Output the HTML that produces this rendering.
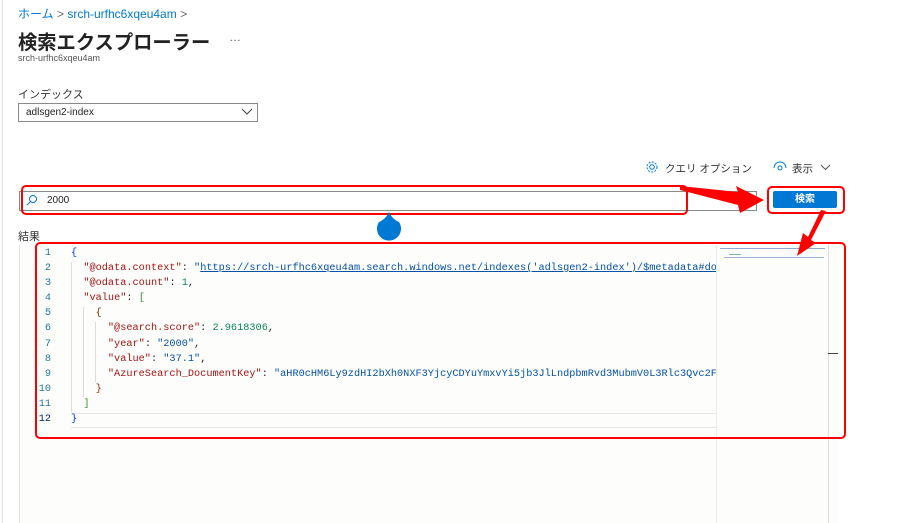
<!DOCTYPE html>
<html><head><meta charset="utf-8"><style>
body{margin:0;width:907px;height:523px;background:#fff;position:relative;overflow:hidden;font-family:"Liberation Sans","Noto Sans CJK JP",sans-serif;}
.a{position:absolute;}
.code{font-family:"Liberation Mono","DejaVu Sans Mono",monospace;font-size:10.25px;white-space:pre;line-height:15.1px;}
.k{color:#a31515}.s{color:#0451a5}.n{color:#098658}.b{color:#0431fa}
</style></head><body>
<div class="a" style="left:2px;top:0;width:1px;height:523px;background:#e1e1e1"></div>
<div class="a" style="left:18px;top:5px;font-size:12px;color:#0078d4">ホーム <span style="color:#666">&gt;</span> srch-urfhc6xqeu4am <span style="color:#666">&gt;</span></div>
<div class="a" style="left:18px;top:27px;font-size:19.3px;font-weight:bold;color:#222">検索エクスプローラー</div>
<div class="a" style="left:229px;top:30px;font-size:12px;color:#666">…</div>
<div class="a" style="left:18px;top:53px;font-size:9px;color:#555">srch-urfhc6xqeu4am</div>
<div class="a" style="left:18px;top:86px;font-size:11px;color:#333">インデックス</div>
<div class="a" style="left:18px;top:103px;width:238px;height:17px;border:1px solid #8a8a8a;font-size:10px;color:#222;line-height:17px;text-indent:7px">adlsgen2-index</div>
<svg class="a" style="left:241px;top:108px" width="12" height="8"><path d="M1 1l5 5 5-5" fill="none" stroke="#444" stroke-width="1"/></svg>
<svg class="a" style="left:645px;top:160px" width="14" height="14"><circle cx="7" cy="7" r="2.3" fill="none" stroke="#0078d4"/><circle cx="7" cy="7" r="5" fill="none" stroke="#0078d4" stroke-dasharray="2 1.3"/></svg>
<div class="a" style="left:665px;top:161px;font-size:10.5px;color:#333">クエリ オプション</div>
<svg class="a" style="left:773px;top:161px" width="14" height="12"><path d="M1 7a6 6 0 0 1 12 0" fill="none" stroke="#0078d4"/><circle cx="7" cy="7" r="2" fill="none" stroke="#0078d4"/></svg>
<div class="a" style="left:792px;top:161px;font-size:10.5px;color:#333">表示</div>
<svg class="a" style="left:820px;top:164px" width="11" height="7"><path d="M1 1l4.5 4.5 4.5-4.5" fill="none" stroke="#555"/></svg>
<div class="a" style="left:19px;top:191px;width:736px;height:18px;border:1px solid #8a8a8a"></div>
<svg class="a" style="left:26px;top:194px" width="12" height="12"><circle cx="7" cy="5" r="3.5" fill="none" stroke="#0078d4"/><path d="M4.5 7.5L1 11" stroke="#0078d4"/></svg>
<div class="a" style="left:47px;top:195px;font-size:10px;color:#222">2000</div>
<div class="a" style="left:773px;top:191px;width:64px;height:17px;background:#0078d4;border-radius:2px;color:#fff;font-size:10px;font-weight:bold;text-align:center;line-height:17px">検索</div>
<div class="a" style="left:18px;top:228px;font-size:11px;color:#333">結果</div>
<div class="a" style="left:19px;top:245px;width:819px;height:278px;background:#fdfdfb;border-left:1px solid #e3e3e3"></div>
<div class="a" style="left:716px;top:245px;width:111px;height:278px;border-left:1px solid #ececec;border-right:1px solid #e0e0e0;background:#fdfdfb"></div>
<div class="a" style="left:720px;top:248px;width:105px;height:1px;background:#8fa8d8"></div>
<div class="a" style="left:724px;top:257px;width:100px;height:1px;background:#a0b0d8"></div>
<div class="a" style="left:729px;top:254px;width:12px;height:1px;background:#7ab89a"></div>
<div class="a" style="left:828px;top:353px;width:10px;height:1px;background:#444"></div>
<div class="a" style="left:71px;top:413px;width:645px;height:1px;background:#e6e6e6"></div>
<div class="a" style="left:71px;top:427px;width:645px;height:1px;background:#e6e6e6"></div>
<div class="a" style="left:71px;top:262px;width:1px;height:150px;background:#ddd"></div>
<div class="a" style="left:83px;top:307px;width:1px;height:90px;background:#ddd"></div>
<div class="a" style="left:95px;top:322px;width:1px;height:60px;background:#ddd"></div>
<div class="a code" style="left:37px;top:246px;color:#237893;text-align:right;width:14px">1
2
3
4
5
6
7
8
9
10
11
<span style="color:#0b216f">12</span></div>
<div class="a code" style="left:71px;top:246px;width:645px;overflow:hidden;color:#222"><span class="b">{</span>
  <span class="k">"@odata.context"</span>: <span class="s">"<u>https://srch-urfhc6xqeu4am.search.windows.net/indexes('adlsgen2-index')/$metadata#docs</u>"</span>,
  <span class="k">"@odata.count"</span>: <span class="n">1</span>,
  <span class="k">"value"</span>: <span style="color:#319331">[</span>
    <span style="color:#7b3814">{</span>
      <span class="k">"@search.score"</span>: <span class="n">2.9618306</span>,
      <span class="k">"year"</span>: <span class="s">"2000"</span>,
      <span class="k">"value"</span>: <span class="s">"37.1"</span>,
      <span class="k">"AzureSearch_DocumentKey"</span>: <span class="s">"aHR0cHM6Ly9zdHI2bXh0NXF3YjcyCDYuYmxvYi5jb3JlLndpbmRvd3MubmV0L3Rlc3Qvc2FtcGxl"</span>
    <span style="color:#7b3814">}</span>
  <span style="color:#319331">]</span>
<span class="b">}</span></div>
<svg class="a" style="left:0;top:0" width="907" height="523">
<g fill="none" stroke="#f00" stroke-width="2">
<rect x="22" y="186" width="665" height="28" rx="4"/>
<rect x="768" y="187" width="76" height="26" rx="4"/>
<rect x="36" y="243" width="809" height="195" rx="4"/>
</g>
<path d="M680 186 L738 192 L736 186 L764 200 L740 213 L738 205 L680 190 Z" fill="#f00"/>
<path d="M826 211 L821 210 L808 237 L803 233 L797 256 L816 243 L811 240 Z" fill="#f00"/>
<path d="M389 212 Q392 219 399 222 A12 12 0 1 1 379 222 Q386 219 389 212 Z" fill="#0078d4"/>
</svg>
</body></html>
